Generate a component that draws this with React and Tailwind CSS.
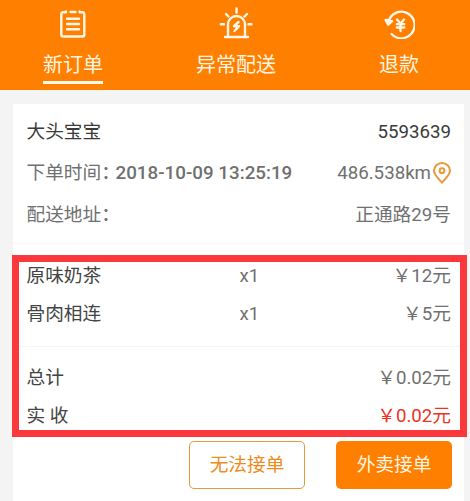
import React from "react";

function OrderIcon() {
  return (
    <svg width="28" height="30" viewBox="0 0 28 30" fill="none" stroke="#fff8ea" strokeWidth="2.400" strokeLinecap="round" strokeLinejoin="round">
      <path d="M3.800 3.200A2 2 0 0 0 2.300 5.200v20.300a2 2 0 0 0 2 2h19a2 2 0 0 0 2-2V5.200a2 2 0 0 0-1.500-2M11.500 3h5M3.800 3.200h3.200v-.700M23.800 3.200h-3.200v-.700" />
      <path d="M8 9.800h12M8 15h12M8 20.200h12" />
    </svg>
  );
}

function AlarmIcon() {
  return (
    <svg width="34" height="32" viewBox="0 0 34 32" fill="none" stroke="#fff8ea" strokeWidth="2.400" strokeLinecap="round" strokeLinejoin="round">
      <path d="M6 30h23M9 29.500V17.500a8.500 8.500 0 0 1 17 0v12M17.500 1.500v4M7 7l2.500 2.500M28 7l-2.500 2.500M1.800 17.200H5M29.500 17.200h3" />
      <path d="M19.500 15l-4.500 4.200h5L15.500 24" strokeWidth="2.500" />
    </svg>
  );
}

function RefundIcon() {
  return (
    <svg width="31" height="30" viewBox="0 0 31 30" fill="none" stroke="#fff8ea" strokeWidth="2.300" strokeLinecap="round" strokeLinejoin="round">
      <path d="M4.500 12.500A13.300 13.300 0 1 1 7.500 25" />
      <path d="M1.600 11l2.600 4.600 4-3.400z" fill="#fff8ea" />
      <path d="M13 10.500l3.500 4L20 10.500M16.500 14.500V22M12.800 15.200h7.500M12.800 18.500h7.500" />
    </svg>
  );
}

function PinIcon() {
  return (
    <svg className="ml-[2px] shrink-0" width="18" height="22" viewBox="0 0 18 22" fill="none" stroke="#e9983a" strokeWidth="2">
      <path d="M9 20.700C6.500 17.800 1 12.800 1 8.800a8 7.800 0 0 1 16 0c0 4-5.500 9-8 11.900z" strokeLinejoin="round" />
      <circle cx="9" cy="8.700" r="2.400" />
    </svg>
  );
}

function Tab({ icon, label, active }) {
  return (
    <div className="flex flex-col items-center">
      <div className="flex h-[42px] items-end justify-center pb-[3px]">{icon}</div>
      <div className={"mt-[8px] h-[34px] border-b-[3px] text-[20px] leading-[30px] " + (active ? "border-[#fff8ea]" : "border-transparent")}>
        {label}
      </div>
    </div>
  );
}

function Label({ children }) {
  return (
    <span className="flex w-[89px] shrink-0 whitespace-nowrap">
      <span>{children}</span>
      <span className="w-[14px] font-medium [font-feature-settings:'halt']">：</span>
    </span>
  );
}

function Item({ name, count, price }) {
  return (
    <div className="grid h-[38px] grid-cols-[213px_1fr_auto] items-center">
      <span className="text-[#444]">{name}</span>
      <span>{count}</span>
      <span>{price}</span>
    </div>
  );
}

export default function App() {
  return (
    <div className="relative h-[501px] w-[470px] overflow-hidden bg-[#f4f4f5] font-['Roboto','Noto_Sans_CJK_SC',sans-serif] text-[18.7px] text-[#707070]">
      <header className="grid h-[90px] grid-cols-[146px_180px_146px] bg-[#ff8000] text-[#fff5e2]">
        <Tab icon={<OrderIcon />} label="新订单" active />
        <Tab icon={<AlarmIcon />} label="异常配送" />
        <Tab icon={<RefundIcon />} label="退款" />
      </header>

      <main className="mt-[14px] ml-[13px] h-[397px] w-[451px] bg-white">
        <section className="h-[140px] border-b border-[#f5f5f5] pt-[7px] pr-[13px] pl-[13.500px] leading-[28px]">
          <div className="flex h-[41px] items-center justify-between text-[#3b3b3b]">
            <span>大头宝宝</span>
            <span>5593639</span>
          </div>
          <div className="flex h-[42px] items-center justify-between">
            <div className="flex">
              <Label>下单时间</Label>
              <span className="text-[18.800px] font-medium">2018-10-09 13:25:19</span>
            </div>
            <div className="flex items-center">
              <span>486.538km</span>
              <PinIcon />
            </div>
          </div>
          <div className="flex h-[41px] items-center justify-between">
            <Label>配送地址</Label>
            <span>正通路29号</span>
          </div>
        </section>

        <section className="h-[103px] border-b border-[#f5f5f5] pt-[13px] pr-[13px] pl-[13.500px] leading-[28px]">
          <Item name="原味奶茶" count="x1" price="￥12元" />
          <Item name="骨肉相连" count="x1" price="￥5元" />
        </section>

        <section className="h-[88px] pt-[12px] pr-[13px] pl-[13.500px] leading-[28px]">
          <div className="flex h-[38px] items-center justify-between">
            <span className="text-[#444]">总计</span>
            <span>￥0.02元</span>
          </div>
          <div className="flex h-[38px] items-center justify-between">
            <span className="text-[#444]">实 收</span>
            <span className="text-[#eb3326]">￥0.02元</span>
          </div>
        </section>

        <div className="mt-[6px] mr-[12px] flex justify-end gap-[31px]">
          <button className="h-[48px] w-[116px] rounded-[5px] border border-[#e9983a] text-[#ed8b1c]">无法接单</button>
          <button className="h-[48px] w-[116px] rounded-[5px] bg-[#ff8000] text-[#fff5e2]">外卖接单</button>
        </div>
      </main>

      <div className="pointer-events-none absolute top-[255px] left-[12px] h-[182px] w-[455px] border-[7px] border-[#fb393c]" />
    </div>
  );
}
